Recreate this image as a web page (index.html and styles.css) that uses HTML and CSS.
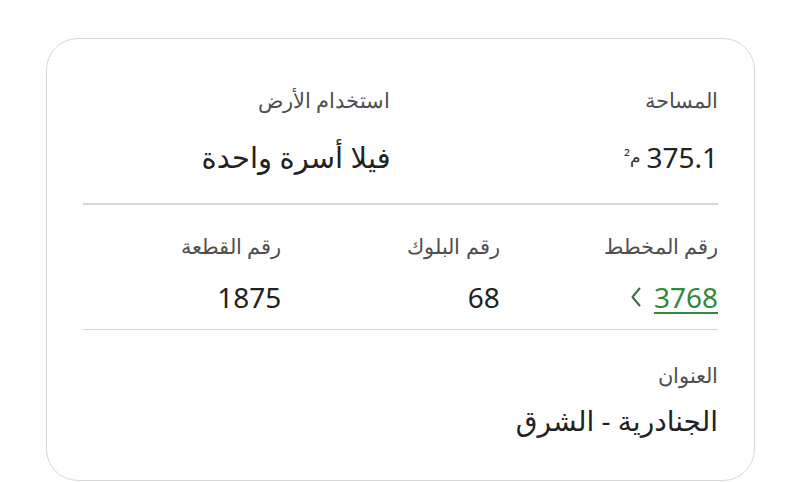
FILE: index.html
```html
<!DOCTYPE html>
<html lang="ar" dir="rtl">
<head>
<meta charset="utf-8">
<link rel="stylesheet" href="styles.css">
</head>
<body>
<div class="card">
  <div class="row two">
    <div class="cell">
      <div class="label">المساحة</div>
      <div class="value">375.1 <span class="unit">م²</span></div>
    </div>
    <div class="cell">
      <div class="label">استخدام الأرض</div>
      <div class="value ar">فيلا أسرة واحدة</div>
    </div>
  </div>
  <div class="divider"></div>
  <div class="row three">
    <div class="cell">
      <div class="label">رقم المخطط</div>
      <div class="value link"><span class="num">3768</span><svg class="chev" width="12" height="22" viewBox="0 0 12 22"><path d="M9.5 2.5 L2.5 11 L9.5 19.5" fill="none" stroke="#3f6b47" stroke-width="2" stroke-linecap="round" stroke-linejoin="round"/></svg></div>
    </div>
    <div class="cell">
      <div class="label">رقم البلوك</div>
      <div class="value">68</div>
    </div>
    <div class="cell">
      <div class="label">رقم القطعة</div>
      <div class="value">1875</div>
    </div>
  </div>
  <div class="divider"></div>
  <div class="row one">
    <div class="cell">
      <div class="label">العنوان</div>
      <div class="value ar big">الجنادرية - الشرق</div>
    </div>
  </div>
</div>
</body>
</html>
```
FILE: styles.css
```css
html, body {
  margin: 0;
  padding: 0;
  background: #ffffff;
}
body {
  font-family: "Noto Sans", "DejaVu Sans", sans-serif;
  width: 800px;
  height: 482px;
  overflow: hidden;
}
.card {
  box-sizing: border-box;
  margin: 38px 45px 0 46px;
  height: 443px;
  border: 1.5px solid #d8d8d8;
  border-radius: 32px;
  padding: 46px 36px 0 36px;
}
.row {
  display: grid;
  column-gap: 20px;
}
.two { grid-template-columns: 1fr 1fr; padding-bottom: 26px; }
.three { grid-template-columns: 1fr 1fr 1fr; padding: 26px 0 12px; }
.one { grid-template-columns: 1fr; padding-top: 30px; }
.label {
  font-size: 21px;
  color: #4f4f4f;
  font-weight: 300;
  line-height: 30px;
}
.value {
  font-size: 28px;
  color: #222;
  line-height: 40px;
  margin-top: 22px;
  display: flex;
  align-items: center;
  gap: 6px;
}
.three .value { margin-top: 16px; }
.unit {
  font-size: 17px;
  color: #333;
}
.ar { font-size: 29px; }
.big { font-size: 28px; margin-top: 10px; }
.link { color: #2f8a3c; gap: 12px; }
.link .num {
  text-decoration: underline;
  text-decoration-thickness: 2px;
  text-underline-offset: 4px;
}
.chev { display: block; }
.divider {
  height: 1.5px;
  background: #d6d6d6;
}
```
